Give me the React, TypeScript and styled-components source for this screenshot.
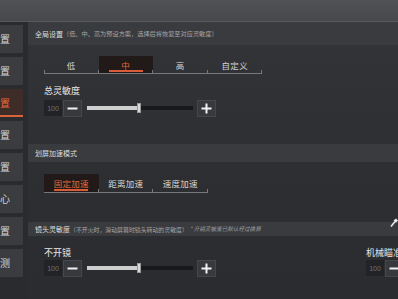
import React, { FC } from 'react';
import styled, { createGlobalStyle } from 'styled-components';

const GlobalStyle = createGlobalStyle`
  html, body {
    margin: 0;
    padding: 0;
    background: #2a2b2e;
  }
  * {
    box-sizing: border-box;
  }
`;

const StyledWrapper = styled.div`
  width: 398px;
  height: 299px;
  overflow: hidden;
  display: flex;
  flex-direction: column;
  background: #2a2b2e;
  font-family: 'Noto Sans CJK SC', 'Noto Sans', sans-serif;
  color: #e4e4e4;
`;

const StyledTopBar = styled.div`
  height: 22px;
  flex-shrink: 0;
  background: linear-gradient(#505256, #46484c);
  border-bottom: 1px solid #56585c;
`;

const StyledBody = styled.div`
  flex: 1;
  display: flex;
  gap: 5px;
  min-height: 0;
`;

const StyledSidebar = styled.nav`
  width: 23px;
  flex-shrink: 0;
  display: flex;
  flex-direction: column;
  gap: 4px;
  padding-top: 3px;
`;

const StyledNavItem = styled.div<{ $active?: boolean }>`
  position: relative;
  height: 28px;
  display: flex;
  align-items: center;
  justify-content: flex-end;
  padding-right: 13px;
  overflow: hidden;
  white-space: nowrap;
  font-size: 10px;
  background: ${({ $active }) => ($active ? '#3e2c28' : '#3b3c40')};
  color: ${({ $active }) => ($active ? '#ea6a3c' : '#d6d6d6')};
  border-bottom: 2px solid ${({ $active }) => ($active ? '#d9623a' : 'transparent')};
`;

const StyledMain = styled.main`
  flex: 1;
  display: flex;
  flex-direction: column;
  background: linear-gradient(#333438, #2d2e31 60%, #2b2c2f);
  overflow: hidden;
`;

const StyledSectionHeader = styled.div<{ $height: number; $top: number }>`
  position: relative;
  height: ${({ $height }) => $height}px;
  margin-top: ${({ $top }) => $top}px;
  flex-shrink: 0;
  display: flex;
  align-items: center;
  padding-left: 7px;
  background: #3a3b3f;
  white-space: nowrap;
`;

const StyledHeaderTitle = styled.span`
  font-size: 7px;
  color: #dcdcdc;
`;

const StyledHeaderNote = styled.span<{ $size: number }>`
  font-size: ${({ $size }) => $size}px;
  color: #a6a6a6;
`;

const StyledHeaderHint = styled.span`
  font-size: 5.6px;
  font-style: italic;
  color: #a0a0a0;
  margin-left: 2px;
`;

const StyledEditIcon = styled.svg`
  position: absolute;
  right: 0;
  top: -4px;
`;

const StyledContent = styled.div`
  padding-left: 16px;
  display: flex;
  flex-direction: column;
`;

const StyledTabs = styled.div<{ $top: number; $height: number }>`
  display: flex;
  margin-top: ${({ $top }) => $top}px;
  height: ${({ $height }) => $height}px;
  border-bottom: 1px solid #77787b;
  align-self: flex-start;
  position: relative;

  &::before {
    content: '';
    position: absolute;
    left: 0;
    bottom: 0;
    width: 1px;
    height: 3px;
    background: #77787b;
  }
`;

const StyledTab = styled.div<{ $active?: boolean }>`
  position: relative;
  width: 54.5px;
  display: flex;
  align-items: center;
  justify-content: center;
  font-size: 8.5px;
  letter-spacing: 0.3px;
  background: ${({ $active }) => ($active ? '#211a19' : 'transparent')};
  color: ${({ $active }) => ($active ? '#e6683d' : '#d4d4d4')};

  &::before {
    content: '';
    position: absolute;
    left: 50%;
    bottom: 1px;
    width: 34px;
    height: 2px;
    margin-left: -17px;
    background: ${({ $active }) => ($active ? '#d95b3a' : 'transparent')};
  }

  &::after {
    content: '';
    position: absolute;
    right: 0;
    bottom: 0;
    width: 1px;
    height: 3px;
    background: #77787b;
  }
`;

const StyledColumns = styled.div`
  display: grid;
  grid-template-columns: 322px 322px;
`;

const StyledLabel = styled.div<{ $top: number }>`
  margin-top: ${({ $top }) => $top}px;
  height: 12px;
  line-height: 12px;
  font-size: 9px;
  color: #e8e8e8;
  white-space: nowrap;
`;

const StyledSliderRow = styled.div<{ $top: number }>`
  display: flex;
  align-items: center;
  height: 16px;
  margin-top: ${({ $top }) => $top}px;
`;

const StyledValueBox = styled.div`
  width: 18px;
  height: 16px;
  display: flex;
  align-items: center;
  justify-content: center;
  background: #222326;
  color: #727272;
  font-family: 'Liberation Sans', Arial, sans-serif;
  font-size: 7px;
`;

const StyledStepButton = styled.div<{ $gap: number }>`
  width: 19px;
  height: 17px;
  margin-left: ${({ $gap }) => $gap}px;
  display: flex;
  align-items: center;
  justify-content: center;
  background: #38393c;
  border: 1px solid #46474a;
  color: #f2f2f2;
`;

const StyledTrack = styled.div`
  position: relative;
  width: 106px;
  height: 4px;
  margin-left: 5px;
  background: #18191b;
`;

const StyledFill = styled.div`
  position: absolute;
  left: 0;
  top: 0;
  bottom: 0;
  background: #cfcfcf;
`;

const StyledThumb = styled.div`
  position: absolute;
  top: -3px;
  width: 4px;
  height: 10px;
  margin-left: -2px;
  background: #d8d8d8;
  border: 1px solid #9a9a9a;
`;

const MinusIcon: FC = () => (
  <svg width="11" height="11" viewBox="0 0 11 11">
    <rect x="0.5" y="4.5" width="10" height="2" fill="#f2f2f2" />
  </svg>
);

const PlusIcon: FC = () => (
  <svg width="11" height="11" viewBox="0 0 11 11">
    <rect x="0.5" y="4.5" width="10" height="2" fill="#f2f2f2" />
    <rect x="4.5" y="0.5" width="2" height="10" fill="#f2f2f2" />
  </svg>
);

type SliderProps = { label: string; value: number; percent: number; labelTop: number; rowTop: number };

const Slider: FC<SliderProps> = ({ label, value, percent, labelTop, rowTop }) => (
  <div>
    <StyledLabel $top={labelTop}>{label}</StyledLabel>
    <StyledSliderRow $top={rowTop}>
      <StyledValueBox>{value}</StyledValueBox>
      <StyledStepButton $gap={1}>
        <MinusIcon />
      </StyledStepButton>
      <StyledTrack>
        <StyledFill style={{ width: `${percent}%` }} />
        <StyledThumb style={{ left: `${percent}%` }} />
      </StyledTrack>
      <StyledStepButton $gap={4}>
        <PlusIcon />
      </StyledStepButton>
    </StyledSliderRow>
  </div>
);

const navItems = ['基础设置', '画面设置', '灵敏度设置', '按键设置', '载具设置', '安全中心', '声音设置', '网络检测'];

const App: FC = () => {
  return (
    <StyledWrapper>
      <GlobalStyle />
      <StyledTopBar />
      <StyledBody>
        <StyledSidebar>
          {navItems.map((item, i) => (
            <StyledNavItem key={item} $active={i === 2}>
              {item}
            </StyledNavItem>
          ))}
        </StyledSidebar>
        <StyledMain>
          <StyledSectionHeader $height={23} $top={0}>
            <StyledHeaderTitle>全局设置</StyledHeaderTitle>
            <StyledHeaderNote $size={6.2}>（低、中、高为预设方案，选择后将恢复至对应灵敏度）</StyledHeaderNote>
          </StyledSectionHeader>
          <StyledContent>
            <StyledTabs $top={11} $height={18}>
              <StyledTab>低</StyledTab>
              <StyledTab $active>中</StyledTab>
              <StyledTab>高</StyledTab>
              <StyledTab>自定义</StyledTab>
            </StyledTabs>
            <Slider label="总灵敏度" value={100} percent={49} labelTop={11} rowTop={3} />
          </StyledContent>

          <StyledSectionHeader $height={18} $top={28}>
            <StyledHeaderTitle>划屏加速模式</StyledHeaderTitle>
          </StyledSectionHeader>
          <StyledContent>
            <StyledTabs $top={12} $height={19}>
              <StyledTab $active>固定加速</StyledTab>
              <StyledTab>距离加速</StyledTab>
              <StyledTab>速度加速</StyledTab>
            </StyledTabs>
          </StyledContent>

          <StyledSectionHeader $height={14} $top={29}>
            <StyledHeaderTitle>镜头灵敏度</StyledHeaderTitle>
            <StyledHeaderNote $size={5.9}>（不开火时，滑动屏幕时镜头转动的灵敏度）</StyledHeaderNote>
            <StyledHeaderHint>* 开镜灵敏度已默认经过换算</StyledHeaderHint>
            <StyledEditIcon width="8" height="9" viewBox="0 0 8 9">
              <path d="M1 8.5 L5 3.5" stroke="#e8e8e8" strokeWidth="1.6" />
              <path d="M3.5 2.5 L6 0.5 L8 2.5 L6 4.8 Z" fill="#e8e8e8" />
            </StyledEditIcon>
          </StyledSectionHeader>
          <StyledContent>
            <StyledColumns>
              <Slider label="不开镜" value={100} percent={49} labelTop={11} rowTop={1} />
              <Slider label="机械瞄准镜" value={100} percent={49} labelTop={11} rowTop={1} />
            </StyledColumns>
          </StyledContent>
        </StyledMain>
      </StyledBody>
    </StyledWrapper>
  );
};

export default App;
